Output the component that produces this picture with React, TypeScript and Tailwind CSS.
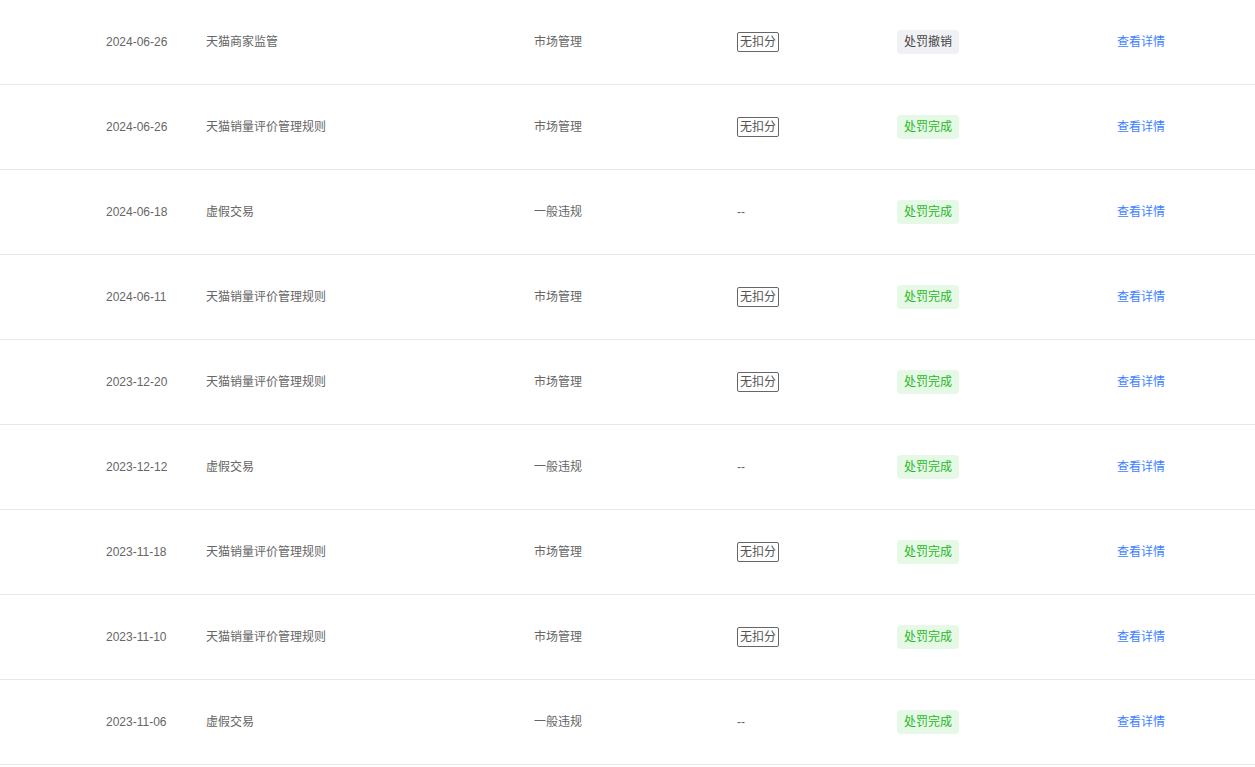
import React from "react";

type Row = {
  date: string;
  name: string;
  type: string;
  deduct: boolean;
  status: "revoked" | "done";
};

const rows: Row[] = [
  { date: "2024-06-26", name: "天猫商家监管", type: "市场管理", deduct: true, status: "revoked" },
  { date: "2024-06-26", name: "天猫销量评价管理规则", type: "市场管理", deduct: true, status: "done" },
  { date: "2024-06-18", name: "虚假交易", type: "一般违规", deduct: false, status: "done" },
  { date: "2024-06-11", name: "天猫销量评价管理规则", type: "市场管理", deduct: true, status: "done" },
  { date: "2023-12-20", name: "天猫销量评价管理规则", type: "市场管理", deduct: true, status: "done" },
  { date: "2023-12-12", name: "虚假交易", type: "一般违规", deduct: false, status: "done" },
  { date: "2023-11-18", name: "天猫销量评价管理规则", type: "市场管理", deduct: true, status: "done" },
  { date: "2023-11-10", name: "天猫销量评价管理规则", type: "市场管理", deduct: true, status: "done" },
  { date: "2023-11-06", name: "虚假交易", type: "一般违规", deduct: false, status: "done" },
];

export default function App() {
  return (
    <div
      className="w-[1255px] h-[767px] bg-white overflow-hidden text-[12px] text-[#666]"
      style={{ fontFamily: '"Liberation Sans", "Noto Sans CJK SC", sans-serif' }}
    >
      {rows.map((r, i) => (
        <div key={i} className="flex items-center h-[85px] border-b border-[#e8e8e8] pl-[106px]">
          <div className="w-[100px] shrink-0">{r.date}</div>
          <div className="w-[328px] shrink-0">{r.name}</div>
          <div className="w-[203px] shrink-0">{r.type}</div>
          <div className="w-[160px] shrink-0 flex items-center">
            {r.deduct ? (
              <span className="inline-block border border-[#666] rounded-[2px] px-[2px] leading-[18px] text-[#555]">
                无扣分
              </span>
            ) : (
              <span>--</span>
            )}
          </div>
          <div className="w-[220px] shrink-0 flex items-center">
            {r.status === "revoked" ? (
              <span className="inline-flex items-center justify-center h-[24px] px-[7px] rounded-[4px] bg-[#f0f1f5] text-[#444]">
                处罚撤销
              </span>
            ) : (
              <span className="inline-flex items-center justify-center h-[24px] px-[7px] rounded-[4px] bg-[#e6f9e6] text-[#1fb81f]">
                处罚完成
              </span>
            )}
          </div>
          <div className="text-[#3d7fff] cursor-pointer">查看详情</div>
        </div>
      ))}
    </div>
  );
}
